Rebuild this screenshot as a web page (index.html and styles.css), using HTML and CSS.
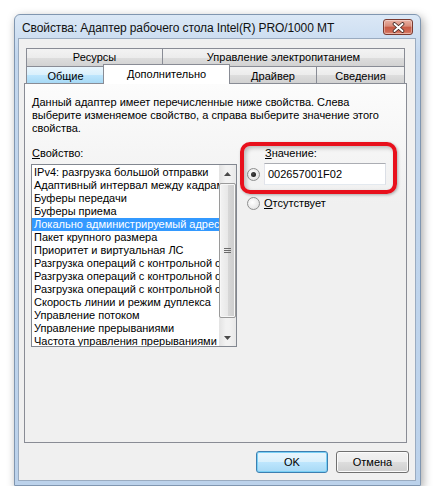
FILE: index.html
```html
<!DOCTYPE html>
<html lang="ru">
<head>
<meta charset="utf-8">
<title>Свойства</title>
<link rel="stylesheet" href="styles.css">
</head>
<body>
<div class="window">
  <div class="titlebar">
    <span class="title">Свойства: Адаптер рабочего стола Intel(R) PRO/1000 MT</span>
    <div class="close">
      <svg width="13" height="11" viewBox="0 0 13 11">
        <path d="M2.5 2 L10.5 9 M10.5 2 L2.5 9" stroke="#3b2420" stroke-width="3.6" stroke-linecap="round"/>
        <path d="M2.5 2 L10.5 9 M10.5 2 L2.5 9" stroke="#ffffff" stroke-width="2" stroke-linecap="round"/>
      </svg>
    </div>
  </div>
  <div class="panel">
    <div class="tabs">
      <div class="tabrow row1">
        <div class="tab t-res">Ресурсы</div>
        <div class="tab t-pow">Управление электропитанием</div>
      </div>
      <div class="tabrow row2">
        <div class="tab t-gen hover">Общие</div>
        <div class="tab t-adv active">Дополнительно</div>
        <div class="tab t-drv">Драйвер</div>
        <div class="tab t-inf">Сведения</div>
      </div>
    </div>
    <div class="page">
      <p class="desc">Данный адаптер имеет перечисленные ниже свойства. Слева<br>выберите изменяемое свойство, а справа выберите значение этого<br>свойства.</p>
      <div class="cols">
        <div class="left">
          <div class="label"><u>С</u>войство:</div>
          <div class="listbox">
            <ul class="items">
              <li>IPv4: разгрузка большой отправки</li>
              <li>Адаптивный интервал между кадрами</li>
              <li>Буферы передачи</li>
              <li>Буферы приема</li>
              <li class="sel">Локально администрируемый адрес</li>
              <li>Пакет крупного размера</li>
              <li>Приоритет и виртуальная ЛС</li>
              <li>Разгрузка операций с контрольной суммой</li>
              <li>Разгрузка операций с контрольной суммой</li>
              <li>Разгрузка операций с контрольной суммой</li>
              <li>Скорость линии и режим дуплекса</li>
              <li>Управление потоком</li>
              <li>Управление прерываниями</li>
              <li>Частота управления прерываниями</li>
            </ul>
            <div class="scrollbar">
              <div class="sbtn">
                <svg width="7" height="4" viewBox="0 0 7 4"><path d="M0 4 L3.5 0 L7 4 Z" fill="#4a4a4a"/></svg>
              </div>
              <div class="thumb">
                <svg width="7" height="5" viewBox="0 0 7 5"><path d="M0 0.5 H7 M0 2.5 H7 M0 4.5 H7" stroke="#6b6b6b" stroke-width="1"/></svg>
              </div>
              <div class="track"></div>
              <div class="sbtn">
                <svg width="7" height="4" viewBox="0 0 7 4"><path d="M0 0 L3.5 4 L7 0 Z" fill="#4a4a4a"/></svg>
              </div>
            </div>
          </div>
        </div>
        <div class="right">
          <div class="vlabel"><u>З</u>начение:</div>
          <div class="vrow first">
            <span class="radio checked"></span>
            <div class="textbox">002657001F02</div>
          </div>
          <div class="vrow second">
            <span class="radio"></span>
            <span><u>О</u>тсутствует</span>
          </div>
          <div class="highlight"></div>
        </div>
      </div>
    </div>
    <div class="buttons">
      <button class="btn default ok">OK</button>
      <button class="btn cancel">Отмена</button>
    </div>
  </div>
</div>
</body>
</html>
```

FILE: styles.css
```css
html, body {
  margin: 0;
  background: #ffffff;
}

body {
  font-family: "Liberation Sans", Arial, sans-serif;
  font-size: 11px;
  color: #000000;
}

.window {
  box-sizing: border-box;
  width: 407px;
  height: 472px;
  margin: 14px 0 0 14px;
  padding: 0 4px 4px 3px;
  border: 1px solid #8096b0;
  border-radius: 6px 6px 0 0;
  background: linear-gradient(#dbe8f6, #c3d7ee 40px, #bcd2eb);
  box-shadow: 2px 3px 10px rgba(0, 0, 0, 0.35);
  display: flex;
  flex-direction: column;
}

.titlebar {
  height: 23px;
  flex: none;
  display: flex;
  justify-content: space-between;
  align-items: flex-start;
}

.title {
  padding: 6px 0 0 4px;
  font-size: 12px;
  line-height: 14px;
  letter-spacing: -0.1px;
  color: #111111;
  white-space: nowrap;
}

.close {
  box-sizing: border-box;
  width: 30px;
  height: 16px;
  margin: 4px 3px 0 0;
  border: 1px solid #7a3a30;
  border-radius: 3px;
  background: linear-gradient(#eab2a4 0%, #d88b79 45%, #c75a44 50%, #d06a55 85%, #e09480 100%);
  box-shadow: inset 0 0 0 1px rgba(255, 255, 255, 0.35);
  display: flex;
  align-items: center;
  justify-content: center;
}

.panel {
  flex: 1;
  box-sizing: border-box;
  background: #f0f0f0;
  border: 1px solid #9aabc0;
  padding: 9px 8px 7px 5px;
  display: flex;
  flex-direction: column;
}

.tabs {
  margin: 0 2px;
}

.tabrow {
  display: flex;
  align-items: flex-start;
}

.tab {
  box-sizing: border-box;
  border: 1px solid #898c95;
  border-right: none;
  border-bottom: none;
  background: linear-gradient(#f3f3f3 0%, #ececec 50%, #dedede 50%, #d2d2d2 100%);
  text-align: center;
  white-space: nowrap;
}

.tab:last-child {
  border-right: 1px solid #898c95;
}

.row1 {
  height: 18px;
}

.row1 .tab {
  height: 18px;
  line-height: 17px;
}

.row2 {
  height: 17px;
}

.row2 .tab {
  height: 17px;
  line-height: 16px;
  padding-top: 1px;
}

.t-res { width: 136px; }
.t-pow { width: 243px; }
.t-gen { width: 78px; }
.t-drv { width: 87px; }
.t-inf { width: 89px; }

.tab.hover {
  background: linear-gradient(#eaf6fd 0%, #d9f0fc 50%, #bee6fd 50%, #a7d9f5 100%);
}

.tab.active {
  width: 127px;
  height: 20px;
  margin: -2px -1px 0 -1px;
  padding-top: 0;
  line-height: 18px;
  border-right: 1px solid #898c95;
  background: #ffffff;
  position: relative;
  z-index: 1;
}

.page {
  box-sizing: border-box;
  width: 383px;
  height: 360px;
  flex: none;
  border: 1px solid #898c95;
  background: linear-gradient(#fcfcfc, #f0f0f0 120px);
  padding: 12px 0 0 6px;
}

.desc {
  margin: 0 0 12px 1px;
  line-height: 13px;
  white-space: nowrap;
}

.cols {
  display: flex;
  align-items: flex-start;
}

.left {
  width: 206px;
  flex: none;
}

.label {
  line-height: 13px;
  padding-left: 1px;
  margin-bottom: 4px;
}

.listbox {
  box-sizing: border-box;
  width: 206px;
  height: 183px;
  border: 1px solid #828790;
  background: #ffffff;
  display: flex;
  overflow: hidden;
}

.items {
  flex: 1;
  min-width: 0;
  list-style: none;
  margin: 0;
  padding: 1px 0 0 0;
  overflow: hidden;
}

.items li {
  height: 13px;
  line-height: 13px;
  padding-left: 2px;
  white-space: nowrap;
  overflow: hidden;
}

.items li.sel {
  background: #3399ff;
  color: #ffffff;
}

.scrollbar {
  width: 17px;
  flex: none;
  display: flex;
  flex-direction: column;
  background: linear-gradient(90deg, #e3e3e3, #f2f2f2 40%, #f2f2f2 60%, #e8e8e8);
}

.sbtn {
  height: 17px;
  flex: none;
  display: flex;
  align-items: center;
  justify-content: center;
}

.thumb {
  box-sizing: border-box;
  height: 135px;
  flex: none;
  margin: 1px 0 0 0;
  border: 1px solid #9a9a9a;
  border-radius: 2px;
  background: linear-gradient(90deg, #f3f3f3, #e8e8e8 50%, #d8d8d8 51%, #cdcdcd);
  box-shadow: inset 0 0 0 1px #f7f7f7;
  display: flex;
  align-items: center;
  justify-content: center;
}

.track {
  flex: 1;
}

.right {
  position: relative;
  margin-left: 10px;
  width: 140px;
}

.vlabel {
  padding-left: 18px;
  line-height: 13px;
}

.vrow {
  display: flex;
  align-items: center;
  gap: 4px;
}

.vrow.first {
  margin-top: 3px;
  height: 22px;
}

.vrow.second {
  margin-top: 12px;
  height: 13px;
  line-height: 13px;
}

.radio {
  box-sizing: border-box;
  width: 13px;
  height: 13px;
  flex: none;
  border-radius: 50%;
  border: 1px solid #8e8f8f;
  background: radial-gradient(circle at 40% 40%, #ffffff, #e6e6e6 70%, #cfcfcf);
  position: relative;
}

.radio.checked::after {
  content: "";
  position: absolute;
  left: 3px;
  top: 3px;
  width: 5px;
  height: 5px;
  border-radius: 50%;
  background: radial-gradient(circle at 40% 40%, #4b4b4b, #0e0e0e);
}

.textbox {
  box-sizing: border-box;
  width: 122px;
  height: 22px;
  border: 1px solid #abadb3;
  border-left-color: #e2e3ea;
  border-right-color: #dbdfe6;
  border-bottom-color: #e3e9ef;
  background: #ffffff;
  padding-left: 3px;
  line-height: 20px;
}

.highlight {
  position: absolute;
  left: -7px;
  top: -5px;
  box-sizing: border-box;
  width: 157px;
  height: 52px;
  border: 4px solid #e8101c;
  border-radius: 10px;
  box-shadow: inset 2px 2px 4px rgba(0, 0, 0, 0.25), 1px 1px 3px rgba(0, 0, 0, 0.3);
  pointer-events: none;
}

.buttons {
  display: flex;
  justify-content: flex-end;
  gap: 8px;
  margin: 8px -2px 0 0;
}

.btn {
  box-sizing: border-box;
  height: 22px;
  padding: 0;
  font-family: "Liberation Sans", Arial, sans-serif;
  font-size: 11px;
  color: #000000;
  border: 1px solid #707070;
  border-radius: 3px;
  background: linear-gradient(#f2f2f2 0%, #ebebeb 50%, #dddddd 50%, #cfcfcf 100%);
  box-shadow: inset 0 0 0 1px #fbfbfb;
}

.btn.ok {
  width: 72px;
}

.btn.cancel {
  width: 73px;
}

.btn.default {
  border-color: #3c7fb1;
  background: linear-gradient(#eaf6fd 0%, #d9f0fc 50%, #bee6fd 50%, #a7d9f5 100%);
  box-shadow: inset 0 0 0 1px #7ad0f5;
}
```
